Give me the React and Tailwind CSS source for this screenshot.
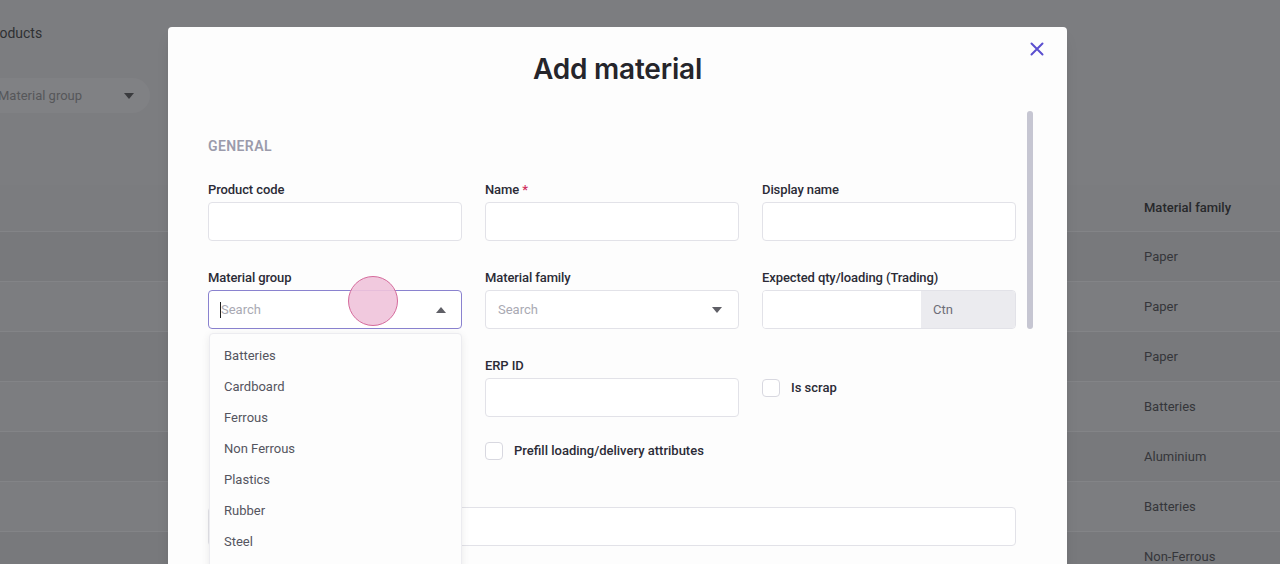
import React from 'react';

const font = { fontFamily: 'Roboto, "Liberation Sans", sans-serif' };

function Caret({ up }) {
  return (
    <svg width="10" height="6" viewBox="0 0 10 6" className="shrink-0">
      {up ? <path d="M0 6 L5 0 L10 6 Z" fill="#5f5f66" /> : <path d="M0 0 L5 6 L10 0 Z" fill="#5f5f66" />}
    </svg>
  );
}

function Label({ children, required }) {
  return (
    <div className="h-[18px] text-[13px] leading-[20px] font-medium text-[#2b2b36] tracking-[-0.1px]">
      {children}
      {required && <span className="text-[#d0305f]"> *</span>}
    </div>
  );
}

function Input({ className = '' }) {
  return <div className={`h-[39px] rounded-[4px] border border-[#e2e2e8] bg-white ${className}`} />;
}

function Checkbox({ label }) {
  return (
    <div className="flex items-center gap-[11px]">
      <div className="w-[18px] h-[18px] rounded-[4px] border border-[#d8d8e0] bg-white" />
      <span className="text-[13px] font-medium text-[#2b2b36]">{label}</span>
    </div>
  );
}

const rows = ['Paper', 'Paper', 'Paper', 'Batteries', 'Aluminium', 'Batteries', 'Non-Ferrous'];
const groups = ['Batteries', 'Cardboard', 'Ferrous', 'Non Ferrous', 'Plastics', 'Rubber', 'Steel'];

export default function App() {
  return (
    <div className="relative w-[1280px] h-[564px] overflow-hidden bg-[#7c7d80]" style={font}>
      {/* page behind the overlay */}
      <div className="flex flex-col">
        <div className="h-[66px] flex items-center">
          <span className="ml-[-14px] text-[14px] text-[#2f3033]">Products</span>
        </div>
        <div className="h-[60px] flex items-start">
          <div className="ml-[-20px] mt-[12px] w-[170px] h-[35px] rounded-[18px] bg-[#808184] flex items-center justify-between pl-[18px] pr-[16px]">
            <span className="text-[13px] text-[#56575a]">Material group</span>
            <svg width="10" height="6" viewBox="0 0 10 6"><path d="M0 0 L5 6 L10 0 Z" fill="#3a3b3e" /></svg>
          </div>
        </div>
        <div className="h-[59px]" />
        <div className="h-[47px] flex items-center border-b border-[#838487] bg-[#7b7c7f]">
          <span className="ml-[1144px] text-[13px] font-medium text-[#27282b]">Material family</span>
        </div>
        {rows.map((r, i) => (
          <div key={i} className={`h-[50px] flex items-center border-b border-[#838487] ${i % 2 === 0 ? 'bg-[#78797c]' : 'bg-[#7c7d80]'}`}>
            <span className="ml-[1144px] text-[13px] text-[#35363a]">{r}</span>
          </div>
        ))}
      </div>

      {/* modal */}
      <div className="absolute left-[168px] top-[27px] w-[899px] h-[560px] bg-[#fdfdfd] rounded-[4px] shadow-lg">
        <div className="relative h-[84px] flex items-center justify-center">
          <h1 className="text-[28px] font-semibold text-[#25252b] tracking-[-0.2px]" style={{ fontFamily: 'Inter, Roboto, sans-serif' }}>
            Add material
          </h1>
          <button className="absolute right-[23px] top-[15px] w-[14px] h-[14px]">
            <svg width="14" height="14" viewBox="0 0 14 14">
              <path d="M1.5 1.5 L12.5 12.5 M12.5 1.5 L1.5 12.5" stroke="#5b4fcf" strokeWidth="2" strokeLinecap="round" />
            </svg>
          </button>
        </div>

        <div className="flex pl-[40px] pr-[34px] gap-[11px]">
          <div className="w-[808px] pt-[25px]">
            <div className="text-[14px] leading-[20px] font-semibold tracking-[0.4px] text-[#9b9bab]">GENERAL</div>

            <div className="grid grid-cols-3 gap-x-[23px] gap-y-[27px] mt-[24px]">
              <div>
                <Label>Product code</Label>
                <Input className="mt-[4px]" />
              </div>
              <div>
                <Label required>Name</Label>
                <Input className="mt-[4px]" />
              </div>
              <div>
                <Label>Display name</Label>
                <Input className="mt-[4px]" />
              </div>

              <div>
                <Label>Material group</Label>
                <div className="mt-[4px] h-[39px] rounded-[4px] border border-[#8a82cf] bg-white flex items-center pl-[11px] pr-[15px]">
                  <span className="w-[1px] h-[16px] bg-[#222]" />
                  <span className="flex-1 text-[13px] text-[#a9a9b3]">Search</span>
                  <Caret up />
                </div>
              </div>
              <div>
                <Label>Material family</Label>
                <div className="mt-[4px] h-[39px] rounded-[4px] border border-[#e2e2e8] bg-white flex items-center pl-[12px] pr-[16px]">
                  <span className="flex-1 text-[13px] text-[#a9a9b3]">Search</span>
                  <Caret />
                </div>
              </div>
              <div>
                <Label>Expected qty/loading (Trading)</Label>
                <div className="mt-[4px] h-[39px] flex rounded-[4px] border border-[#e2e2e8] overflow-hidden">
                  <div className="flex-1 bg-white" />
                  <div className="w-[94px] bg-[#ebebef] flex items-center pl-[12px] text-[13px] text-[#6d6d78]">Ctn</div>
                </div>
              </div>

              <div />
              <div>
                <Label>ERP ID</Label>
                <Input className="mt-[4px]" />
              </div>
              <div className="pt-[22px]">
                <Checkbox label="Is scrap" />
              </div>
            </div>

            <div className="grid grid-cols-3 gap-x-[23px] mt-[24px]">
              <div />
              <Checkbox label="Prefill loading/delivery attributes" />
            </div>

            <Input className="mt-[46px] h-[37px]" />
          </div>
          <div className="w-[6px] h-[218px] rounded-full bg-[#c6c6d2]" />
        </div>
      </div>

      {/* open dropdown for Material group */}
      <div className="absolute left-[209px] top-[333px] w-[253px] h-[250px] bg-[#fdfdfd] rounded-[4px] border border-[#ececf0] shadow-[0_2px_8px_rgba(0,0,0,0.08)] pt-[6px]">
        {groups.map((g) => (
          <div key={g} className="h-[31px] flex items-center pl-[14px] text-[13px] text-[#55555f]">
            {g}
          </div>
        ))}
      </div>

      {/* click indicator */}
      <div className="absolute left-[348px] top-[276px] w-[50px] h-[50px] rounded-full bg-[#f0c3da]/90 border-[1.5px] border-[#d56b9c]" />
    </div>
  );
}
